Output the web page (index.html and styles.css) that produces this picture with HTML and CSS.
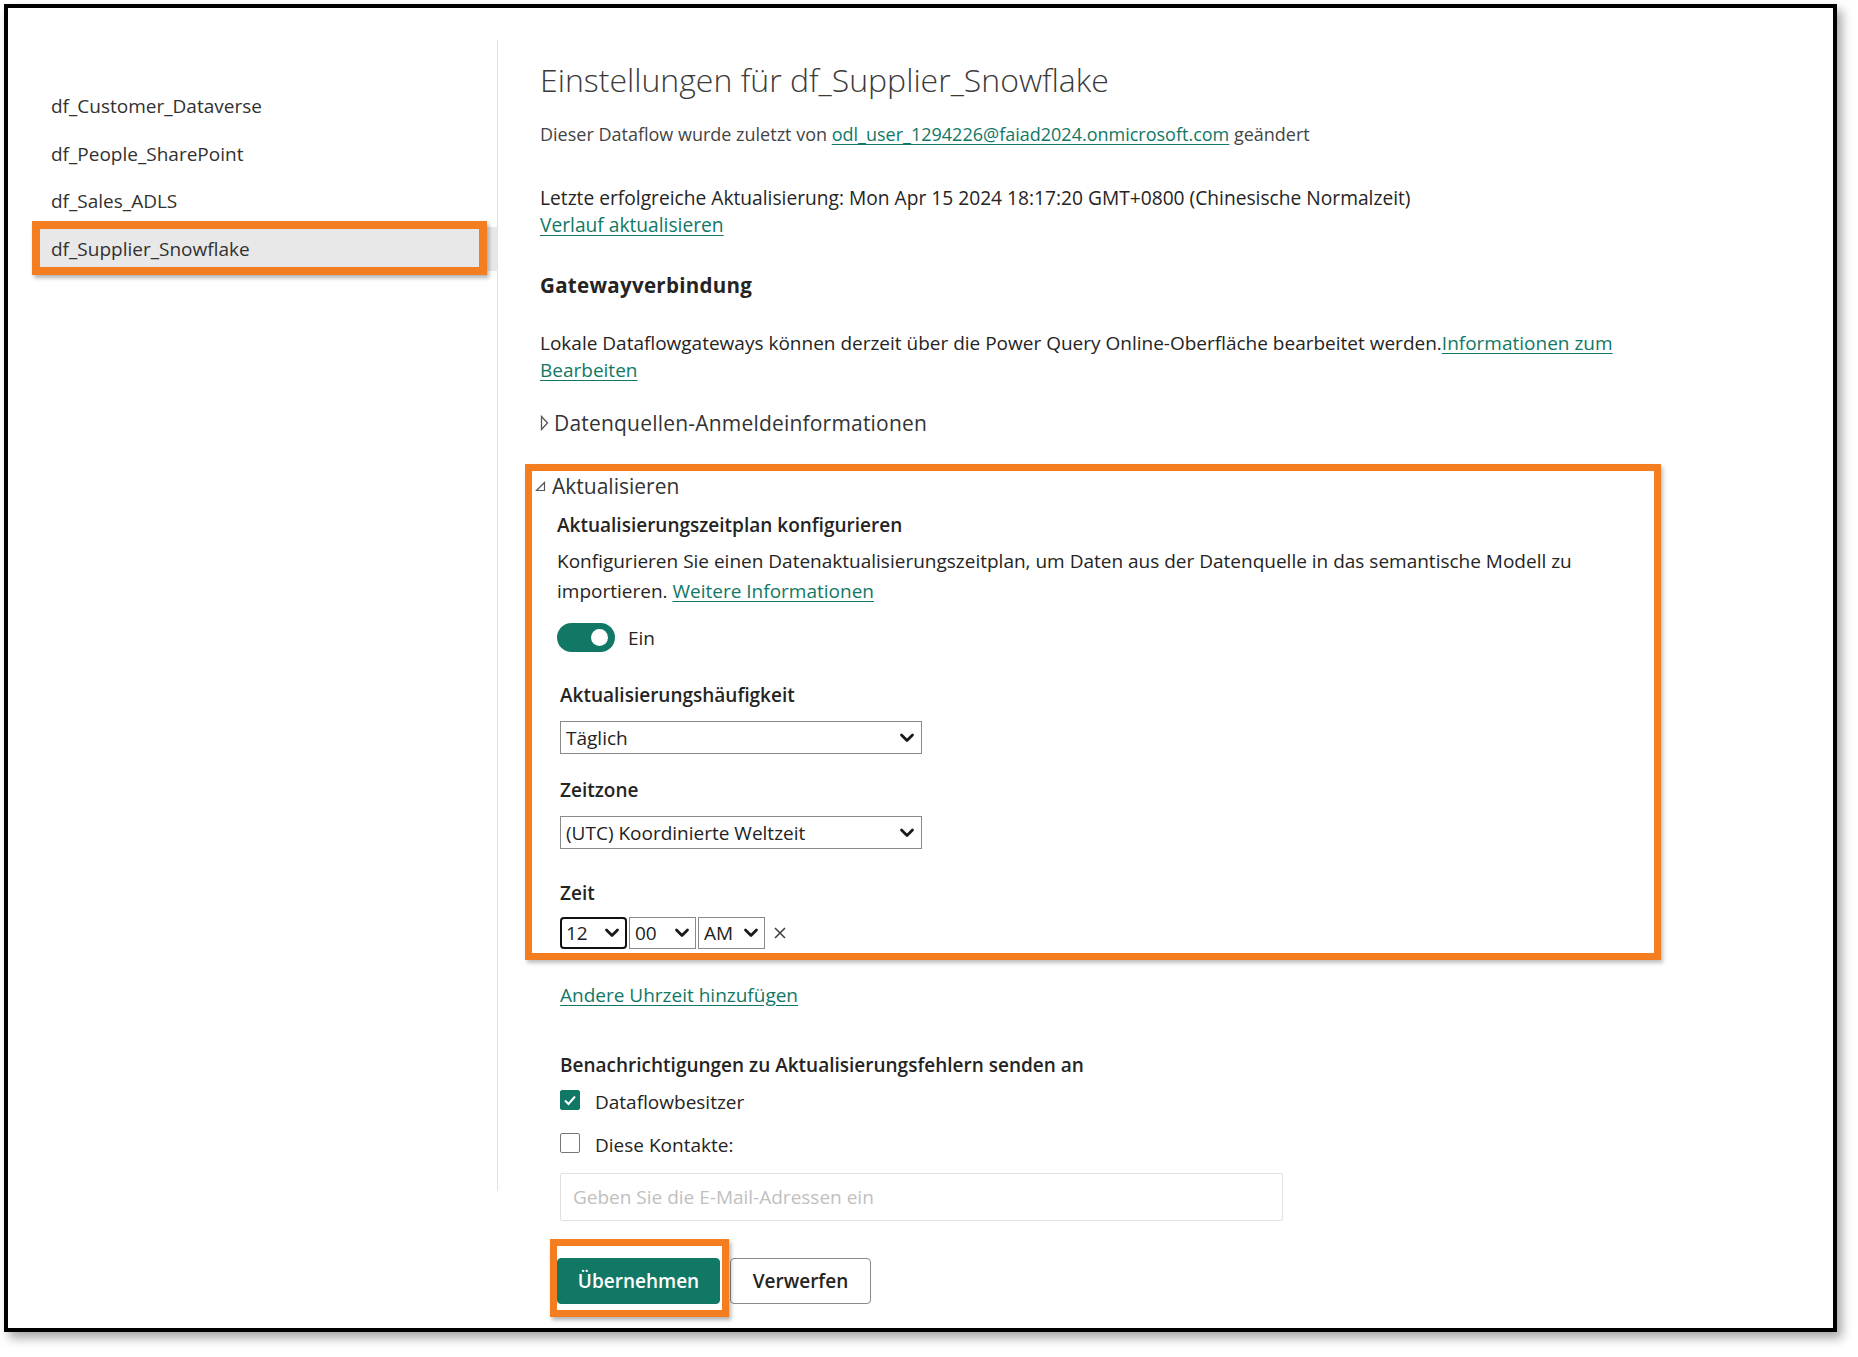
FILE: index.html
```html
<!DOCTYPE html>
<html lang="de">
<head>
<meta charset="utf-8">
<title>Einstellungen für df_Supplier_Snowflake</title>
<link rel="stylesheet" href="styles.css">
</head>
<body>
<div class="frame">
  <aside class="sidebar">
    <ul class="nav">
      <li class="nav-item">df_Customer_Dataverse</li>
      <li class="nav-item">df_People_SharePoint</li>
      <li class="nav-item">df_Sales_ADLS</li>
      <li class="nav-item is-selected">df_Supplier_Snowflake</li>
    </ul>
  </aside>

  <main class="content">
    <h1 class="title">Einstellungen für df_Supplier_Snowflake</h1>
    <p class="meta">Dieser Dataflow wurde zuletzt von <a class="link" href="#">odl_user_1294226@faiad2024.onmicrosoft.com</a> geändert</p>
    <p class="last-refresh">Letzte erfolgreiche Aktualisierung: Mon Apr 15 2024 18:17:20 GMT+0800 (Chinesische Normalzeit)<br><a class="link" href="#">Verlauf aktualisieren</a></p>

    <h2 class="section-title">Gatewayverbindung</h2>
    <p class="gateway-text">Lokale Dataflowgateways können derzeit über die Power Query Online-Oberfläche bearbeitet werden.<a class="link" href="#">Informationen zum<br>Bearbeiten</a></p>

    <div class="collapsible">
      <svg class="caret caret-right" width="9" height="16" viewBox="0 0 9 16"><polygon points="1.5,1.5 7.5,8 1.5,14.5" fill="none" stroke="#555" stroke-width="1.3"/></svg>
      <span>Datenquellen-Anmeldeinformationen</span>
    </div>

    <section class="refresh">
      <div class="collapsible collapsible-open">
        <svg class="caret caret-open" width="11" height="11" viewBox="0 0 11 11"><polygon points="9.5,1.5 9.5,9.5 1.5,9.5" fill="none" stroke="#555" stroke-width="1.2"/></svg>
        <span>Aktualisieren</span>
      </div>
      <div class="refresh-body">
        <h3 class="sub-title">Aktualisierungszeitplan konfigurieren</h3>
        <p class="refresh-text">Konfigurieren Sie einen Datenaktualisierungszeitplan, um Daten aus der Datenquelle in das semantische Modell zu<br>importieren. <a class="link" href="#">Weitere Informationen</a></p>

        <div class="toggle-row">
          <span class="toggle"><span class="toggle-thumb"></span></span>
          <span class="toggle-label">Ein</span>
        </div>

        <div class="field-label">Aktualisierungshäufigkeit</div>
        <div class="select select-wide">
          <span>Täglich</span>
          <svg class="chevron" width="16" height="10" viewBox="0 0 16 10"><path d="M2.5 2 L8 7.5 L13.5 2" fill="none" stroke="#1a1a1a" stroke-width="2.8" stroke-linecap="round" stroke-linejoin="round"/></svg>
        </div>

        <div class="field-label field-label-zone">Zeitzone</div>
        <div class="select select-wide">
          <span>(UTC) Koordinierte Weltzeit</span>
          <svg class="chevron" width="16" height="10" viewBox="0 0 16 10"><path d="M2.5 2 L8 7.5 L13.5 2" fill="none" stroke="#1a1a1a" stroke-width="2.8" stroke-linecap="round" stroke-linejoin="round"/></svg>
        </div>

        <div class="field-label field-label-time">Zeit</div>
        <div class="time-row">
          <div class="select select-time is-focused">
            <span>12</span>
            <svg class="chevron" width="16" height="10" viewBox="0 0 16 10"><path d="M2.5 2 L8 7.5 L13.5 2" fill="none" stroke="#1a1a1a" stroke-width="2.8" stroke-linecap="round" stroke-linejoin="round"/></svg>
          </div>
          <div class="select select-time">
            <span>00</span>
            <svg class="chevron" width="16" height="10" viewBox="0 0 16 10"><path d="M2.5 2 L8 7.5 L13.5 2" fill="none" stroke="#1a1a1a" stroke-width="2.8" stroke-linecap="round" stroke-linejoin="round"/></svg>
          </div>
          <div class="select select-time">
            <span>AM</span>
            <svg class="chevron" width="16" height="10" viewBox="0 0 16 10"><path d="M2.5 2 L8 7.5 L13.5 2" fill="none" stroke="#1a1a1a" stroke-width="2.8" stroke-linecap="round" stroke-linejoin="round"/></svg>
          </div>
          <svg class="remove" width="14" height="14" viewBox="0 0 14 14"><path d="M2 2 L12 12 M12 2 L2 12" stroke="#444" stroke-width="1.6"/></svg>
        </div>
      </div>
    </section>

    <div class="after">
      <a class="link add-time" href="#">Andere Uhrzeit hinzufügen</a>
      <h3 class="notify-title">Benachrichtigungen zu Aktualisierungsfehlern senden an</h3>
      <div class="check-row">
        <span class="checkbox is-checked"><svg width="14" height="12" viewBox="0 0 14 12"><path d="M2 6.5 L5.5 10 L12 2.5" fill="none" stroke="#fff" stroke-width="2"/></svg></span>
        <span>Dataflowbesitzer</span>
      </div>
      <div class="check-row check-row-second">
        <span class="checkbox"></span>
        <span>Diese Kontakte:</span>
      </div>
      <div class="email-input">Geben Sie die E-Mail-Adressen ein</div>
      <div class="actions">
        <button class="btn btn-primary" type="button">Übernehmen</button>
        <button class="btn btn-secondary" type="button">Verwerfen</button>
      </div>
    </div>
  </main>
</div>
</body>
</html>
```
FILE: styles.css
```css
* { box-sizing: border-box; }

html, body {
  margin: 0;
  padding: 0;
  background: #ffffff;
}

body {
  font-family: "Open Sans", "Noto Sans", sans-serif;
  color: #252423;
  width: 1858px;
  height: 1357px;
  overflow: hidden;
}

.frame {
  margin: 4px 0 0 4px;
  width: 1833px;
  height: 1328px;
  border: 4px solid #000;
  background: #fff;
  box-shadow: 5px 6px 10px rgba(0, 0, 0, 0.35);
  display: flex;
  align-items: flex-start;
}

/* ---------- sidebar ---------- */
.sidebar {
  width: 490px;
  height: 1151px;
  margin-top: 32px;
  border-right: 1px solid #e3e3e3;
  flex: none;
}

.nav {
  list-style: none;
  margin: 0;
  padding: 43px 0 0 30px;
}

.nav-item {
  height: 47.5px;
  line-height: 46px;
  padding-left: 13px;
  font-size: 19px;
  color: #323130;
  position: relative;
}

.nav-item.is-selected {
  background: #e8e8e8;
  height: 44px;
  line-height: 44px;
  margin-top: 1px;
}

.nav-item.is-selected::after {
  content: "";
  position: absolute;
  left: -6px;
  top: -6px;
  right: 10px;
  bottom: -4px;
  border: 8px solid #f47d20;
  box-shadow: 2px 3px 4px rgba(0, 0, 0, 0.3);
}

/* ---------- content ---------- */
.content {
  flex: 1;
  padding: 52px 0 0 42px;
}

.title {
  margin: 0;
  font-size: 32px;
  font-weight: 300;
  line-height: 40px;
  color: #3b3a39;
}

.meta {
  margin: 21px 0 0;
  font-size: 18px;
  line-height: 26px;
  color: #444;
}

.link {
  color: #117865;
  text-decoration: underline;
  text-underline-offset: 3px;
}

.last-refresh {
  margin: 37px 0 0;
  font-size: 19.2px;
  line-height: 27px;
}

.section-title {
  margin: 34px 0 0;
  font-size: 20.5px;
  font-weight: 700;
  letter-spacing: 0.3px;
  line-height: 26px;
}

.gateway-text {
  margin: 32px 0 0;
  font-size: 19px;
  line-height: 27px;
}

.collapsible {
  margin-top: 25px;
  display: flex;
  align-items: center;
  gap: 5px;
  font-size: 21px;
  line-height: 28px;
  letter-spacing: 0.2px;
  color: #333;
}

.caret { flex: none; }

/* ---------- highlighted refresh section ---------- */
.refresh {
  margin: 27px 0 0 -15px;
  width: 1136px;
  border: 7px solid #f47d20;
  box-shadow: 2px 3px 4px rgba(0, 0, 0, 0.25);
  padding: 2px 0 4px 3px;
}

.collapsible-open {
  margin-top: 0;
  gap: 6px;
  font-size: 21px;
  line-height: 26px;
  letter-spacing: 0;
}

.refresh-body {
  padding-left: 22px;
}

.sub-title {
  margin: 13px 0 0;
  font-size: 19px;
  font-weight: 600;
  line-height: 26px;
}

.refresh-text {
  margin: 8px 0 0;
  font-size: 19px;
  line-height: 30px;
}

.toggle-row {
  margin-top: 17px;
  display: flex;
  align-items: center;
  gap: 13px;
  height: 29px;
}

.toggle {
  width: 58px;
  height: 29px;
  border-radius: 15px;
  background: #117865;
  display: flex;
  align-items: center;
  justify-content: flex-end;
  padding-right: 7px;
}

.toggle-thumb {
  width: 17px;
  height: 17px;
  border-radius: 50%;
  background: #fff;
}

.toggle-label {
  font-size: 19px;
}

.field-label {
  margin-top: 31px;
  padding-left: 3px;
  font-size: 19px;
  font-weight: 600;
  line-height: 24px;
}

.field-label-zone { margin-top: 24px; }
.field-label-time { margin-top: 32px; }

.select {
  display: flex;
  align-items: center;
  justify-content: space-between;
  border: 1px solid #8a8a8a;
  background: #fff;
  font-size: 19px;
  color: #222;
}

.select-wide {
  margin: 14px 0 0 3px;
  width: 362px;
  height: 33px;
  padding: 0 6px 0 5px;
}

.time-row {
  margin: 12px 0 0 3px;
  display: flex;
  align-items: center;
  gap: 2px;
}

.select-time {
  width: 67px;
  height: 32px;
  padding: 0 5px 0 5px;
}

.select-time.is-focused {
  border: 2px solid #111;
  border-radius: 4px;
  padding-left: 4px;
}

.remove {
  margin-left: 6px;
}

/* ---------- after section ---------- */
.after {
  padding-left: 20px;
}

.add-time {
  display: block;
  margin-top: 22px;
  font-size: 19px;
  line-height: 26px;
  width: max-content;
}

.notify-title {
  margin: 44px 0 0;
  font-size: 19px;
  font-weight: 600;
  line-height: 26px;
}

.check-row {
  margin-top: 10px;
  height: 28px;
  display: flex;
  align-items: center;
  gap: 15px;
  font-size: 19px;
}

.check-row-second { margin-top: 15px; }

.checkbox {
  width: 20px;
  height: 20px;
  border: 1px solid #777;
  border-radius: 2px;
  display: flex;
  align-items: center;
  justify-content: center;
  margin-top: -4px;
}

.checkbox.is-checked {
  background: #117865;
  border-color: #117865;
}

.email-input {
  margin-top: 14px;
  width: 723px;
  height: 48px;
  border: 1px solid #e1e1e1;
  border-radius: 2px;
  padding: 0 12px;
  display: flex;
  align-items: center;
  font-size: 19px;
  color: #c0c0c0;
}

.actions {
  margin-top: 37px;
  display: flex;
  gap: 10px;
}

.btn {
  height: 46px;
  border-radius: 4px;
  font-family: "Open Sans", "Noto Sans", sans-serif;
  font-size: 19px;
  font-weight: 600;
  cursor: pointer;
}

.btn-primary {
  position: relative;
  width: 163px;
  background: #117865;
  border: 1px solid #117865;
  color: #fff;
  margin-left: -3px;
}

.btn-primary::after {
  content: "";
  position: absolute;
  left: -8px;
  top: -20px;
  right: -10px;
  bottom: -14px;
  border: 7px solid #f47d20;
  box-shadow: 2px 3px 4px rgba(0, 0, 0, 0.3);
}

.btn-secondary {
  width: 141px;
  background: #fff;
  border: 1px solid #8a8a8a;
  color: #252423;
}
```
